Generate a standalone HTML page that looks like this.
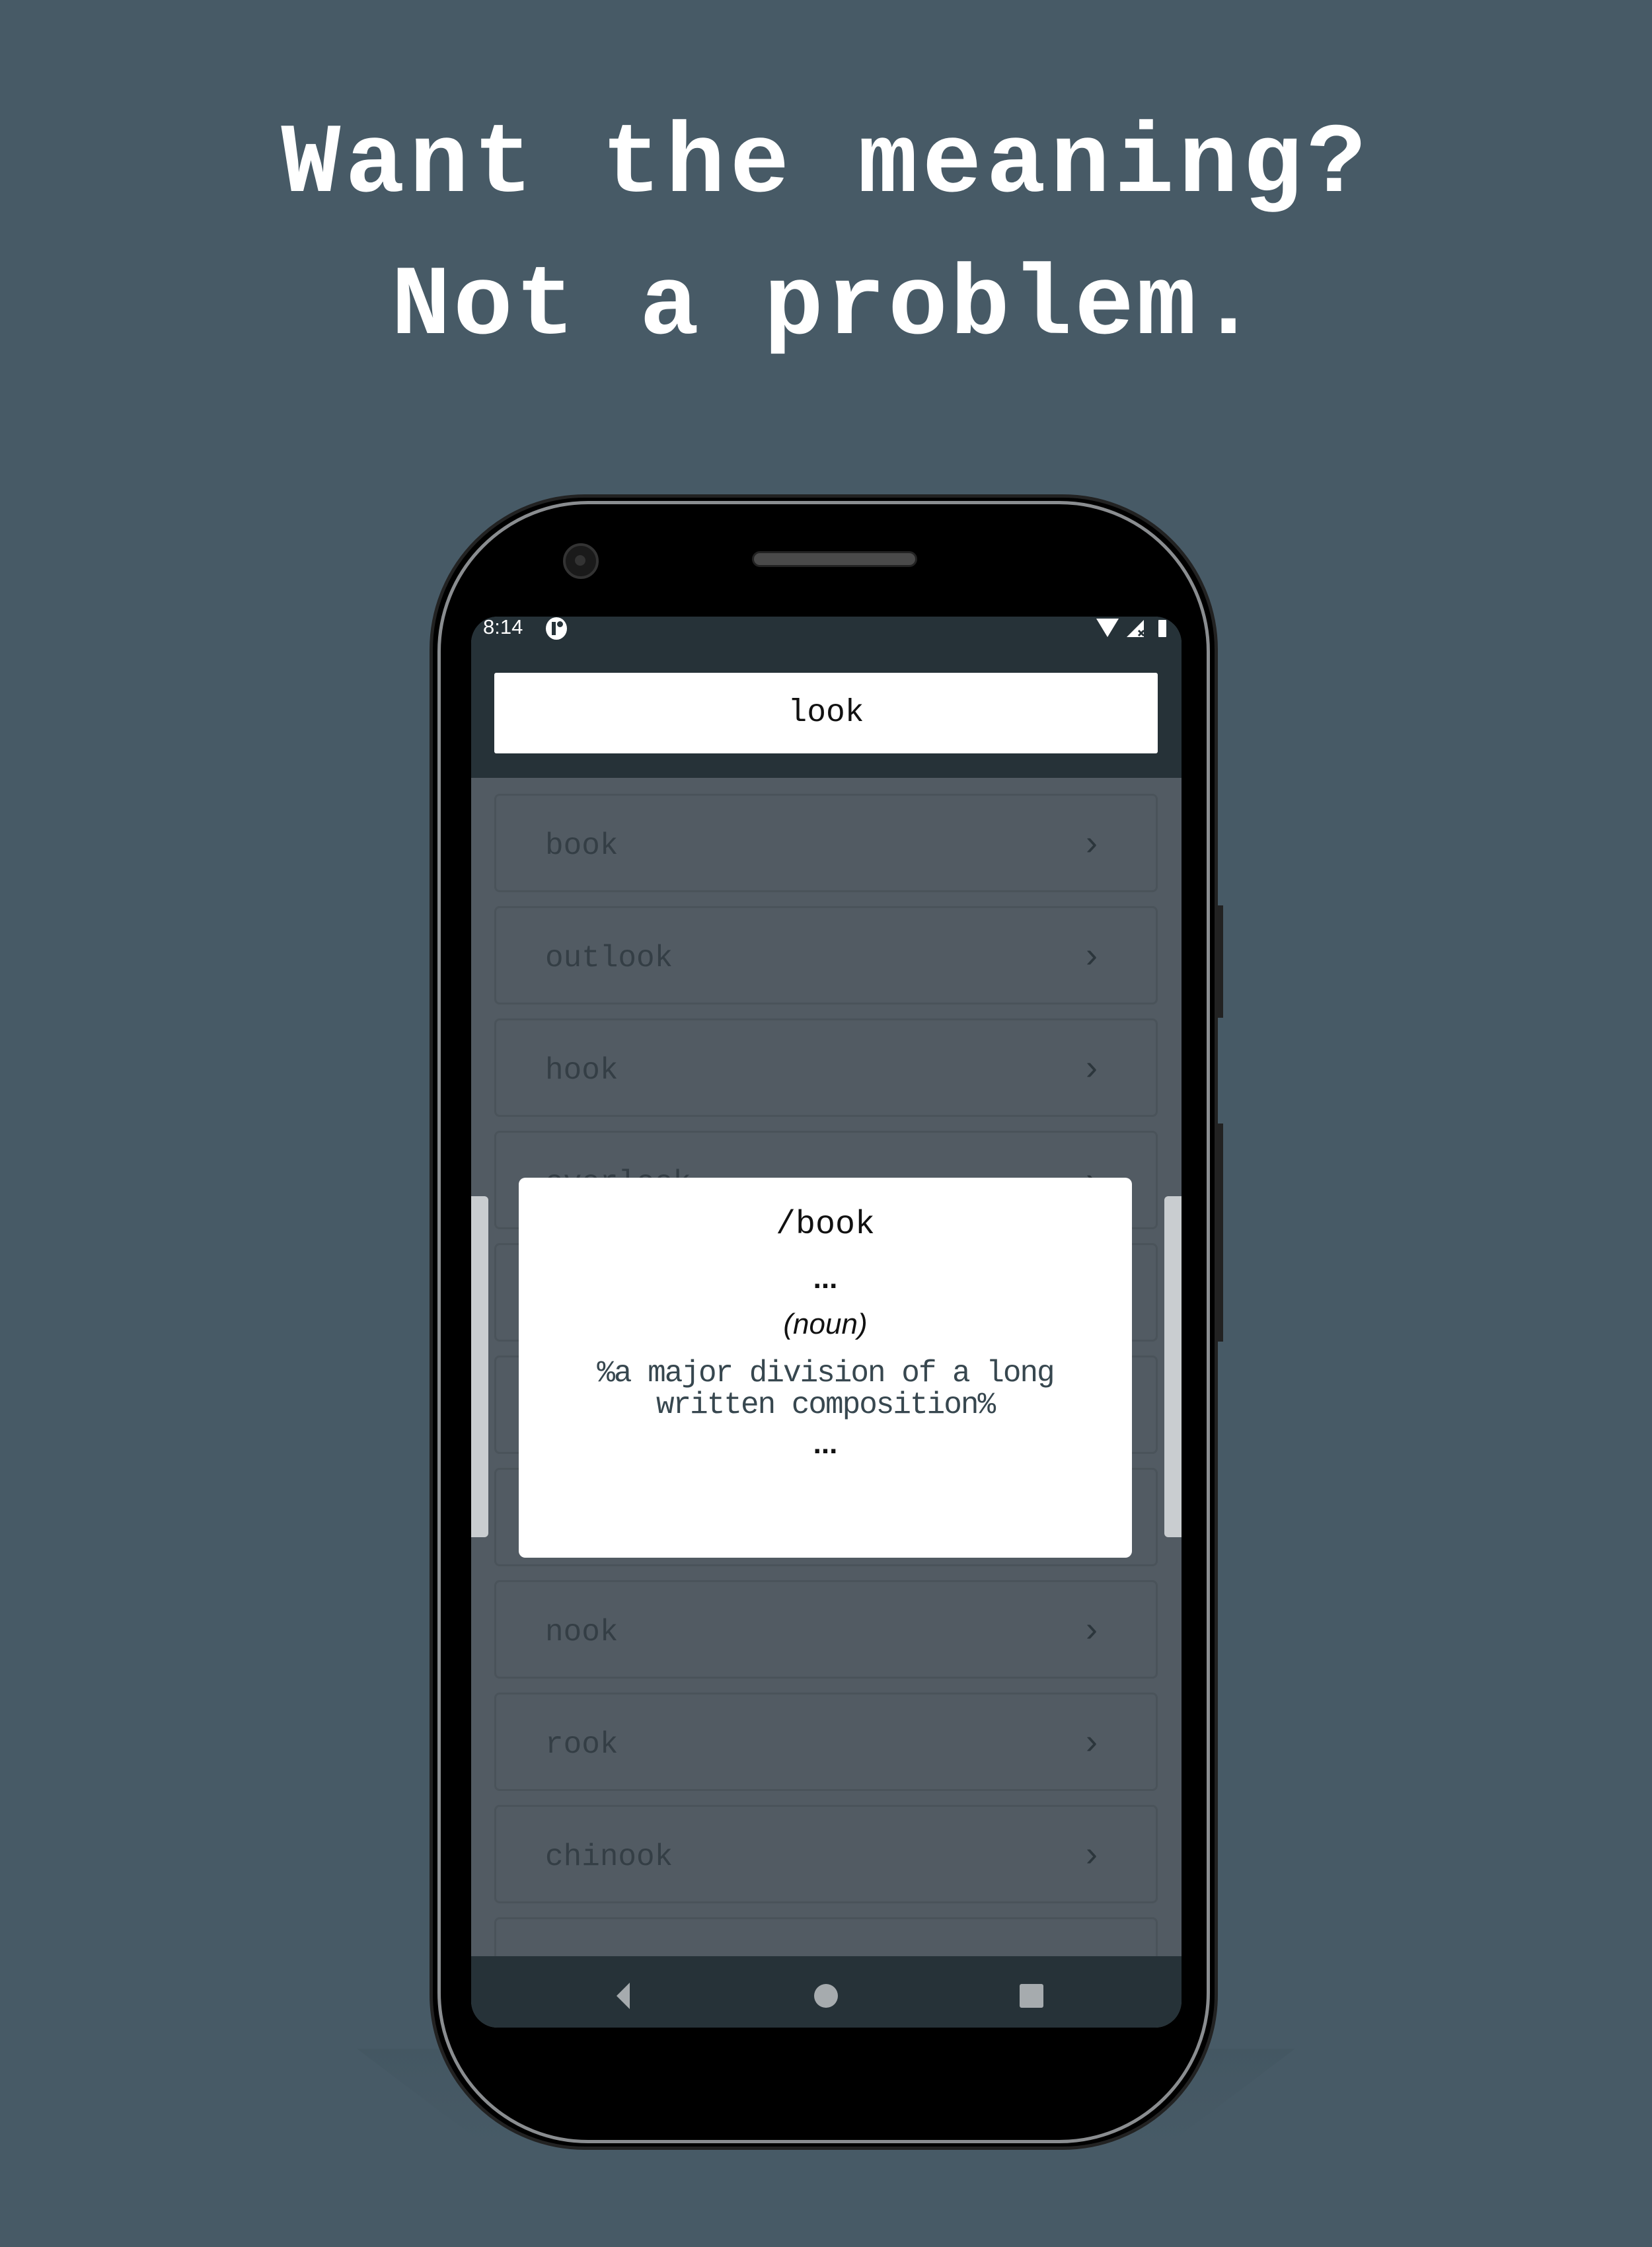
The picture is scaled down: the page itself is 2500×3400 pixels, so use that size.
<!DOCTYPE html>
<html><head><meta charset="utf-8"><style>
*{margin:0;padding:0;box-sizing:border-box}
body{width:2500px;height:3400px;background:#475a66;position:relative;overflow:hidden;font-family:"Liberation Mono",monospace}
.t{position:absolute;left:0;width:2500px;text-align:center;color:#fff;font-family:"Liberation Mono",monospace;font-weight:bold;font-size:150px;white-space:nowrap}
.abs{position:absolute}
.item{position:absolute;left:748px;width:1004px;height:149px;border:3px solid #4a535a;border-radius:8px;background:#525b63}
.item span{position:absolute;left:74px;top:50px;font-size:46px;color:#343e45}
.item i{position:absolute;right:88px;top:40px;font-style:normal;font-size:54px;color:#2c363c;font-family:"Liberation Sans",sans-serif}
</style></head><body>
<div class="t" style="top:165px;letter-spacing:7px">Want the meaning?</div>
<div class="t" style="top:380px;letter-spacing:4px">Not a problem.</div>
<!-- shadow -->
<div class="abs" style="left:540px;top:3100px;width:1420px;height:150px;background:linear-gradient(#425560,#475a66);clip-path:polygon(0 0,100% 0,86% 100%,14% 100%);opacity:.6"></div>
<!-- phone -->
<div class="abs" style="left:650px;top:748px;width:1193px;height:2505px;border-radius:235px;background:#000;border:5px solid #222"></div>
<div class="abs" style="left:662px;top:758px;width:1169px;height:2485px;border-radius:228px;border:5px solid #8a8d90"></div>
<div class="abs" style="left:676px;top:772px;width:1141px;height:2457px;border-radius:215px;background:#000"></div>
<div class="abs" style="left:1843px;top:1370px;width:8px;height:170px;background:#222"></div>
<div class="abs" style="left:1843px;top:1700px;width:8px;height:330px;background:#222"></div>
<div class="abs" style="left:852px;top:822px;width:54px;height:54px;border-radius:50%;background:#1a1a1a;border:4px solid #333"></div>
<div class="abs" style="left:870px;top:840px;width:16px;height:16px;border-radius:50%;background:#333"></div>
<div class="abs" style="left:1138px;top:834px;width:250px;height:24px;border-radius:12px;background:#4a4a4a;border:3px solid #222"></div>
<!-- screen -->
<div class="abs" style="left:713px;top:933px;width:1075px;height:2135px;border-radius:40px;background:#525b63;overflow:hidden">
 <div class="abs" style="left:0;top:0;width:1075px;height:244px;background:#263238"></div>
</div>
<div class="abs" style="left:731px;top:931px;font-family:'Liberation Sans',sans-serif;font-size:31px;color:#fff">8:14</div>
<div class="abs" style="left:826px;top:934px;width:32px;height:34px;border-radius:50%;background:#fff"></div>
<div class="abs" style="left:835px;top:941px;width:6px;height:20px;background:#263238"></div>
<div class="abs" style="left:843px;top:940px;width:9px;height:9px;border-radius:50%;background:#263238"></div>
<svg class="abs" style="left:1655px;top:934px" width="120" height="34"><polygon points="4,2 38,2 21,30" fill="#fff"/><polygon points="50,30 76,4 76,30" fill="#fff"/><path d="M68 20l8 8M76 20l-8 8" stroke="#263238" stroke-width="3"/><rect x="98" y="4" width="12" height="26" rx="1" fill="#fff"/></svg>
<div class="abs" style="left:748px;top:1018px;width:1004px;height:122px;background:#fff;border-radius:3px;text-align:center;font-size:48px;line-height:122px;color:#111">look</div>
<div class="item" style="top:1201px"><span>book</span><i>›</i></div>
<div class="item" style="top:1371px"><span>outlook</span><i>›</i></div>
<div class="item" style="top:1541px"><span>hook</span><i>›</i></div>
<div class="item" style="top:1711px"><span>overlook</span><i>›</i></div>
<div class="item" style="top:1881px"><span></span></div>
<div class="item" style="top:2051px"><span></span></div>
<div class="item" style="top:2221px"><span></span></div>
<div class="item" style="top:2391px"><span>nook</span><i>›</i></div>
<div class="item" style="top:2561px"><span>rook</span><i>›</i></div>
<div class="item" style="top:2731px"><span>chinook</span><i>›</i></div>
<div class="item" style="top:2901px"><span></span></div>
<!-- nav -->
<div class="abs" style="left:713px;top:2960px;width:1075px;height:108px;background:#263238;border-radius:0 0 40px 40px"></div>
<svg class="abs" style="left:900px;top:2995px" width="720" height="50"><polygon points="53,5 53,45 33,25" fill="#a6abae"/><ellipse cx="350" cy="25" rx="18" ry="18" fill="#a6abae"/><rect x="643" y="7" width="36" height="36" rx="3" fill="#a6abae"/></svg>
<!-- side bars -->
<div class="abs" style="left:713px;top:1810px;width:26px;height:516px;background:#c9cdd0;border-radius:0 6px 6px 0"></div>
<div class="abs" style="left:1762px;top:1810px;width:26px;height:516px;background:#c9cdd0;border-radius:6px 0 0 6px"></div>
<!-- dialog -->
<div class="abs" style="left:785px;top:1782px;width:928px;height:575px;background:#fff;border-radius:10px;text-align:center">
 <div class="abs" style="left:0;width:928px;top:43px;font-size:50px;color:#111">/book</div>
 <div class="abs" style="left:0;width:928px;top:128px;font-size:44px;color:#111;font-family:'Liberation Sans',sans-serif;font-weight:bold">...</div>
 <div class="abs" style="left:0;width:928px;top:197px;font-size:44px;color:#111;font-family:'Liberation Sans',sans-serif;font-style:italic">(noun)</div>
 <div class="abs" style="left:0;width:928px;top:272px;font-size:46px;color:#37474f;line-height:48px;letter-spacing:-2px">%a major division of a long<br>written composition%</div>
 <div class="abs" style="left:0;width:928px;top:378px;font-size:44px;color:#111;font-family:'Liberation Sans',sans-serif;font-weight:bold">...</div>
</div>
</body></html>
